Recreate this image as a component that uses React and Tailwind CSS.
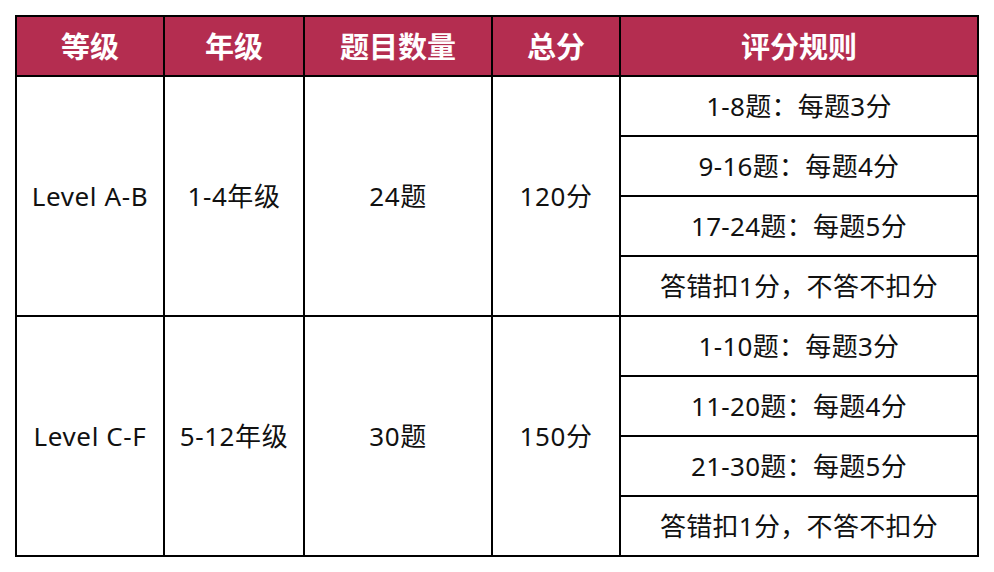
import React from "react";

const font = { fontFamily: '"Noto Sans", "Noto Sans CJK SC", sans-serif' };

function Rule({ children }) {
  return (
    <td className="h-[60px] border-2 border-black text-center text-[26px] tracking-[0.3px] text-[#111] leading-none">
      {children}
    </td>
  );
}

function Merged({ children }) {
  return (
    <td rowSpan={4} className="border-2 border-black text-center text-[26px] tracking-[0.6px] text-[#111] leading-none">
      {children}
    </td>
  );
}

export default function App() {
  const headers = ["等级", "年级", "题目数量", "总分", "评分规则"];
  const widths = ["w-[148px]", "w-[140px]", "w-[188px]", "w-[128px]", "w-[358px]"];
  return (
    <div className="w-[994px] h-[572px] bg-white pt-[15px] pl-[15px]" style={font}>
      <table className="border-collapse table-fixed w-[964px]">
        <thead>
          <tr className="bg-[#b42d50]">
            {headers.map((h, i) => (
              <th
                key={h}
                className={`${widths[i]} h-[60px] border-2 border-black text-white font-bold text-[29px] leading-none`}
              >
                {h}
              </th>
            ))}
          </tr>
        </thead>
        <tbody>
          <tr>
            <Merged>Level A-B</Merged>
            <Merged>1-4年级</Merged>
            <Merged>24题</Merged>
            <Merged>120分</Merged>
            <Rule>1-8题：每题3分</Rule>
          </tr>
          <tr><Rule>9-16题：每题4分</Rule></tr>
          <tr><Rule>17-24题：每题5分</Rule></tr>
          <tr><Rule>答错扣1分，不答不扣分</Rule></tr>
          <tr>
            <Merged>Level C-F</Merged>
            <Merged>5-12年级</Merged>
            <Merged>30题</Merged>
            <Merged>150分</Merged>
            <Rule>1-10题：每题3分</Rule>
          </tr>
          <tr><Rule>11-20题：每题4分</Rule></tr>
          <tr><Rule>21-30题：每题5分</Rule></tr>
          <tr><Rule>答错扣1分，不答不扣分</Rule></tr>
        </tbody>
      </table>
    </div>
  );
}
